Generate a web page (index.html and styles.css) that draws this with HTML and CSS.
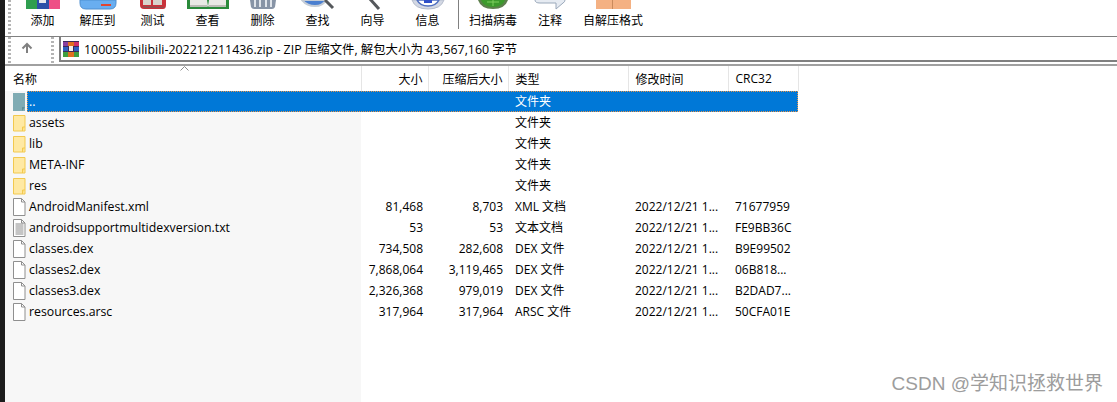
FILE: index.html
```html
<!DOCTYPE html>
<html lang="en">
<head>
  <meta charset="UTF-8" />
  <title>100055-bilibili-202212211436.zip</title>
  <meta name="viewport" content="width=device-width, initial-scale=1" />
  <link rel="stylesheet" href="styles.css">
</head>
<body>
  <div class="edge"></div>
  <div class="window">
    <div class="toolbar">
      <div class="grip"></div>
      <div class="tool">
        <svg class="tool-icon" width="34" height="10" viewBox="0 0 34 10"><rect width="11" height="9" fill="#2f9e4f"/><rect x="11" width="12" height="9" fill="#2c4fa8"/><rect x="13" width="7" height="3" fill="#e8e8ee"/><rect x="23" width="11" height="9" fill="#ee4f86"/></svg>
        <span>添加</span>
      </div>
      <div class="tool">
        <svg class="tool-icon" width="38" height="10" viewBox="0 0 38 10"><path d="M1 0h36v3q0 6-6 6H7q-6 0-6-6z" fill="#69aef0" stroke="#4f8fd0"/><rect x="22" y="4" width="10" height="2" fill="#e2452f"/></svg>
        <span>解压到</span>
      </div>
      <div class="tool">
        <svg class="tool-icon" width="28" height="10" viewBox="0 0 28 10"><path d="M1 0v5q0 4 4 4h19q3 0 3-4V0z" fill="#c9323a"/><path d="M4 0v5h8V0zM14 0v5h9V0z" fill="#d8d4cc"/><path d="M3 6l22 1v1H5z" fill="#8d5050"/></svg>
        <span>测试</span>
      </div>
      <div class="tool">
        <svg class="tool-icon" width="42" height="10" viewBox="0 0 42 10"><path d="M0 0h42v9H0z" fill="#2a8a3a"/><path d="M3 0h17l1 6-18 0zM22 0h17v6H21z" fill="#e9e9e4"/><path d="M3 5h17l1 2H3zM21 7l1-2h17v2z" fill="#bdbdb6"/></svg>
        <span>查看</span>
      </div>
      <div class="tool">
        <svg class="tool-icon" width="26" height="10" viewBox="0 0 26 10"><path d="M0 0h26l-1 7q-1 2-3 2H4Q2 9 1 7z" fill="#8794a6"/><path d="M5 0v7M10 0v7M16 0v7M21 0v7" stroke="#dfe4ea" stroke-width="2"/></svg>
        <span>删除</span>
      </div>
      <div class="tool">
        <svg class="tool-icon" width="34" height="10" viewBox="0 0 34 10"><path d="M1 0q5 6 13 6t11-6z" fill="#4a7fd0" stroke="#c4ccd6" stroke-width="2"/><path d="M24 0l8 8" stroke="#55585c" stroke-width="3"/></svg>
        <span>查找</span>
      </div>
      <div class="tool">
        <svg class="tool-icon" width="34" height="10" viewBox="0 0 34 10"><path d="M14 -1l9 10" stroke="#55585c" stroke-width="3"/></svg>
        <span>向导</span>
      </div>
      <div class="tool">
        <svg class="tool-icon" width="34" height="10" viewBox="0 0 34 10"><path d="M1 0q3 9 16 9T33 0z" fill="#d3d8e4" stroke="#b4bccb"/><path d="M6 0q3 6 11 6T28 0z" fill="#fff" stroke="#4f6fc0" stroke-width="1.5"/><rect x="13" width="8" height="3" fill="#2f4fc8"/></svg>
        <span>信息</span>
      </div>
      <div class="tool-sep"></div>
      <div class="tool tool-wide">
        <svg class="tool-icon" width="30" height="10" viewBox="0 0 30 10"><path d="M0 0q3 9 15 9T30 0z" fill="#5d7f4c"/><path d="M3 0q2 7 12 7T27 0z" fill="#3c9a2c"/><path d="M15 0v6M9 2h12" stroke="#7fcf5f"/></svg>
        <span>扫描病毒</span>
      </div>
      <div class="tool tool-note">
        <svg class="tool-icon" width="32" height="10" viewBox="0 0 32 10"><path d="M1 0q0 3 5 3h16l0 6 7-6q2-1 2-3" fill="#e6ebf2" stroke="#9aa8ba"/></svg>
        <span>注释</span>
      </div>
      <div class="tool tool-sfx">
        <svg class="tool-icon" width="35" height="10" viewBox="0 0 35 10"><rect width="35" height="9" fill="#f4b183"/><rect x="16" width="1" height="9" fill="#c98a5c"/></svg>
        <span>自解压格式</span>
      </div>
    </div>

    <div class="addressbar">
      <div class="grip"></div>
      <svg class="up-arrow" width="12" height="12" viewBox="0 0 12 12"><path d="M6 11V2M1.500 6.500L6 2l4.500 4.500" fill="none" stroke="#808080" stroke-width="2"/></svg>
      <div class="grip grip-right"></div>
      <div class="path-box">
        <svg width="16" height="16" viewBox="0 0 16 16"><rect width="16" height="16" fill="#3a2a5a"/><rect y="1" width="5" height="4" fill="#8a3f9e"/><rect x="5" y="1" width="6" height="4" fill="#e07020"/><rect x="11" y="1" width="5" height="4" fill="#d02f6a"/><rect y="6" width="5" height="4" fill="#2f5fc0"/><rect x="11" y="6" width="5" height="4" fill="#2f5fc0"/><rect x="6" y="5" width="4" height="5" fill="#f4f0ea"/><rect y="11" width="5" height="5" fill="#3f9e3f"/><rect x="5" y="11" width="6" height="5" fill="#e07020"/><rect x="11" y="11" width="5" height="5" fill="#3f9e3f"/></svg>
        <span>100055-bilibili-202212211436.zip - ZIP 压缩文件, 解包大小为 43,567,160 字节</span>
      </div>
    </div>

    <div class="list">
      <table>
        <thead>
          <tr>
            <th class="col-name">名称<svg class="sort-caret" width="9" height="5" viewBox="0 0 9 5"><path d="M.500 4.500l4-4 4 4" fill="none" stroke="#8a8a8a"/></svg></th>
            <th class="num col-size">大小</th>
            <th class="num col-packed">压缩后大小</th>
            <th class="col-type">类型</th>
            <th class="col-time">修改时间</th>
            <th class="col-crc">CRC32</th>
          </tr>
        </thead>
        <tbody>
          <tr class="selected">
            <td class="name"><svg class="file-icon" width="13" height="18" viewBox="0 0 13 18"><path d="M0 0h12v14l0 4H0z" fill="#7fabb3"/><path d="M9 18v-4h3z" fill="#5f8f98"/></svg><span class="label">..</span></td>
            <td></td><td></td><td class="type">文件夹</td><td></td><td></td>
          </tr>
          <tr>
            <td class="name"><svg class="file-icon" width="13" height="18" viewBox="0 0 13 18"><use href="#folder"/></svg><span class="label">assets</span></td>
            <td></td><td></td><td class="type">文件夹</td><td></td><td></td>
          </tr>
          <tr>
            <td class="name"><svg class="file-icon" width="13" height="18" viewBox="0 0 13 18"><use href="#folder"/></svg><span class="label">lib</span></td>
            <td></td><td></td><td class="type">文件夹</td><td></td><td></td>
          </tr>
          <tr>
            <td class="name"><svg class="file-icon" width="13" height="18" viewBox="0 0 13 18"><use href="#folder"/></svg><span class="label">META-INF</span></td>
            <td></td><td></td><td class="type">文件夹</td><td></td><td></td>
          </tr>
          <tr>
            <td class="name"><svg class="file-icon" width="13" height="18" viewBox="0 0 13 18"><use href="#folder"/></svg><span class="label">res</span></td>
            <td></td><td></td><td class="type">文件夹</td><td></td><td></td>
          </tr>
          <tr>
            <td class="name"><svg class="file-icon" width="13" height="18" viewBox="0 0 13 18"><use href="#page"/></svg><span class="label">AndroidManifest.xml</span></td>
            <td class="num">81,468</td><td class="num">8,703</td><td class="type">XML 文档</td><td class="time">2022/12/21 1...</td><td class="crc">71677959</td>
          </tr>
          <tr>
            <td class="name"><svg class="file-icon" width="13" height="18" viewBox="0 0 13 18"><use href="#page"/><path d="M2.500 5h8M2.500 7h8M2.500 9h8M2.500 11h8M2.500 13h8M2.500 15h8" stroke="#8a8a8a"/></svg><span class="label">androidsupportmultidexversion.txt</span></td>
            <td class="num">53</td><td class="num">53</td><td class="type">文本文档</td><td class="time">2022/12/21 1...</td><td class="crc">FE9BB36C</td>
          </tr>
          <tr>
            <td class="name"><svg class="file-icon" width="13" height="18" viewBox="0 0 13 18"><use href="#page"/></svg><span class="label">classes.dex</span></td>
            <td class="num">734,508</td><td class="num">282,608</td><td class="type">DEX 文件</td><td class="time">2022/12/21 1...</td><td class="crc">B9E99502</td>
          </tr>
          <tr>
            <td class="name"><svg class="file-icon" width="13" height="18" viewBox="0 0 13 18"><use href="#page"/></svg><span class="label">classes2.dex</span></td>
            <td class="num">7,868,064</td><td class="num">3,119,465</td><td class="type">DEX 文件</td><td class="time">2022/12/21 1...</td><td class="crc">06B818...</td>
          </tr>
          <tr>
            <td class="name"><svg class="file-icon" width="13" height="18" viewBox="0 0 13 18"><use href="#page"/></svg><span class="label">classes3.dex</span></td>
            <td class="num">2,326,368</td><td class="num">979,019</td><td class="type">DEX 文件</td><td class="time">2022/12/21 1...</td><td class="crc">B2DAD7...</td>
          </tr>
          <tr>
            <td class="name"><svg class="file-icon" width="13" height="18" viewBox="0 0 13 18"><use href="#page"/></svg><span class="label">resources.arsc</span></td>
            <td class="num">317,964</td><td class="num">317,964</td><td class="type">ARSC 文件</td><td class="time">2022/12/21 1...</td><td class="crc">50CFA01E</td>
          </tr>
        </tbody>
      </table>
    </div>
  </div>

  <div class="watermark">CSDN @学知识拯救世界</div>

  <svg class="defs" width="0" height="0">
    <defs>
      <g id="folder"><path d="M.500 1.500h11.500v15.500H.500z" fill="#ffe9a3" stroke="#f2c94f"/><path d="M9.500 17v-4h2.500" fill="#ffdf80" stroke="#f2c94f"/></g>
      <g id="page"><path d="M.500 .500h8l3.500 3.500v13.500H.500z" fill="#fff" stroke="#8f8f8f"/><path d="M8.500 .500v3.500h3.500" fill="none" stroke="#8f8f8f"/></g>
    </defs>
  </svg>
</body>
</html>
```
FILE: styles.css
```css
* {
  box-sizing: border-box;
}
html, body {
  height: 100%;
}
body {
  margin: 0;
  display: flex;
  overflow: hidden;
  background: white;
  color: #000;
  font-family: "Open Sans", "Noto Sans CJK SC", sans-serif;
  font-size: 12px;
}
.edge {
  width: 5px;
  flex: none;
  background: #1c1c1c;
}
.window {
  flex: 1;
  display: flex;
  flex-direction: column;
  min-width: 0;
}
.defs {
  position: absolute;
}

/* toolbar, its icons are cut off by the top of the screenshot */
.toolbar {
  height: 37px;
  flex: none;
  display: flex;
  padding-left: 3px;
  border-bottom: 1px solid #808080;
}
.grip {
  width: 3px;
  flex: none;
  margin-right: 4px;
  background: repeating-linear-gradient(to bottom, #b4b4b4 0 2px, transparent 2px 4px);
}
.tool {
  width: 55px;
  flex: none;
  display: flex;
  flex-direction: column;
  align-items: center;
}
.tool-icon {
  display: block;
  height: 10px;
  margin-bottom: 3px;
}
.tool span {
  line-height: 16px;
  white-space: nowrap;
}
.tool-sep {
  width: 1px;
  height: 29px;
  margin-left: 3px;
  background: #808080;
}
.tool-wide {
  width: 60px;
  margin-left: 4px;
}
.tool-note {
  width: 54px;
}
.tool-sfx {
  width: 72px;
}

/* path row */
.addressbar {
  height: 29px;
  flex: none;
  display: flex;
  padding-left: 3px;
  border-bottom: 2px solid #a0a0a0;
}
.addressbar .grip {
  height: 26px;
  margin-right: 0;
}
.up-arrow {
  margin: 5px 0 0 10px;
}
.grip-right {
  margin-left: 18px;
}
.path-box {
  flex: 1;
  height: 25px;
  margin-left: 5px;
  border: 2px solid #808080;
  border-width: 0 0 2px 2px;
  display: flex;
  align-items: center;
  gap: 5px;
  padding-left: 2px;
  font-size: 12.4px;
}

/* file list */
.list {
  flex: 1;
  background: linear-gradient(to right, #f7f7f7 356px, #fff 356px);
}
table {
  width: 793px;
  table-layout: fixed;
  border-collapse: collapse;
}
th {
  height: 25px;
  padding: 0 5px 0 7px;
  background: #fff;
  font-weight: normal;
  text-align: left;
  border-right: 1px solid #e5e5e5;
  position: relative;
}
td {
  height: 21px;
  padding: 0 5px 0 7px;
  white-space: nowrap;
  overflow: hidden;
}
.col-name { width: 356px; padding-left: 8px; }
.col-size { width: 67px; }
.col-packed { width: 80px; }
.col-type { width: 120px; }
.col-time { width: 100px; }
.col-crc { width: 70px; }
.num {
  text-align: right;
}
.sort-caret {
  position: absolute;
  left: 175px;
  top: 0;
}
td.name {
  padding: 0 0 0 8px;
}
td.type {
  padding-bottom: 2px;
}
.file-icon {
  display: inline-block;
  vertical-align: middle;
  margin-right: 3px;
}
.label {
  vertical-align: middle;
  font-size: 12.3px;
}
.selected {
  position: relative;
}
/* dotted focus box of the current row */
.selected::after {
  content: "";
  position: absolute;
  left: 22px;
  top: 0;
  right: 0;
  bottom: 0;
  border: 1px dotted #e8954a;
}
.selected td {
  background: #0078d7;
  color: white;
}
.selected td.name {
  background: linear-gradient(to right, #f7f7f7 22px, #0078d7 22px);
}
.watermark {
  position: absolute;
  right: 14px;
  bottom: 7px;
  color: #8c8c8c;
  font-family: "Liberation Sans", "Noto Sans CJK SC", sans-serif;
  font-size: 19px;
  opacity: .85;
}
```
